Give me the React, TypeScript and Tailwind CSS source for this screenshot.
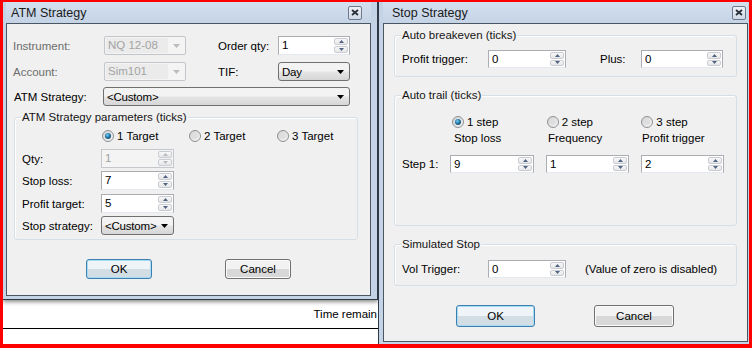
import React from "react";

const font = "font-['Liberation_Sans',Arial,sans-serif]";

function CloseBox() {
  return (
    <div className="flex h-[14px] w-[14px] items-center justify-center rounded-[2px] border border-[#6e7a8a] bg-gradient-to-b from-[#eef2f7] to-[#cfd9e6]">
      <svg width="8" height="7" viewBox="0 0 8 7">
        <path d="M1 1 L7 6 M7 1 L1 6" stroke="#2b2f36" strokeWidth="1.8" />
      </svg>
    </div>
  );
}

function Window({
  title,
  titlePad,
  className,
  children,
}: {
  title: string;
  titlePad: string;
  className: string;
  children: React.ReactNode;
}) {
  return (
    <div className={`flex flex-col bg-[#c4d3e6] ${className}`}>
      <div className={`flex h-[21px] shrink-0 items-center justify-between bg-gradient-to-b from-[#d5e0ee] to-[#c4d3e6] ${titlePad}`}>
        <span className="text-[12.5px] text-[#1a1a1a]">{title}</span>
        <CloseBox />
      </div>
      <div className="flex-1 border border-[#4b5663] bg-[#f0f0f0]">{children}</div>
    </div>
  );
}

function SpinArrows({ disabled }: { disabled?: boolean }) {
  const c = disabled ? "#b5b9c0" : "#4f6383";
  return (
    <div className="my-[1px] mr-[1px] flex w-[14px] flex-col gap-[1px]">
      <div className="flex flex-1 items-center justify-center rounded-[2px] border border-[#c9ccd2] bg-gradient-to-b from-[#f8f8f8] to-[#e6e6e6]">
        <svg width="5" height="3" viewBox="0 0 5 3">
          <polygon points="0,3 5,3 2.5,0" fill={c} />
        </svg>
      </div>
      <div className="flex flex-1 items-center justify-center rounded-[2px] border border-[#c9ccd2] bg-gradient-to-b from-[#f8f8f8] to-[#e6e6e6]">
        <svg width="5" height="3" viewBox="0 0 5 3">
          <polygon points="0,0 5,0 2.5,3" fill={c} />
        </svg>
      </div>
    </div>
  );
}

function Spin({ value, w, h = "h-[19px]", disabled }: { value: string; w: string; h?: string; disabled?: boolean }) {
  return (
    <div
      className={`flex ${w} ${h} shrink-0 border ${
        disabled ? "border-[#c4c8cc] bg-[#f4f4f4] text-[#a0a0a0]" : "border-[#abadb3] border-b-[#e3e9ef] bg-white text-black"
      }`}
    >
      <span className="flex-1 pl-[3px] leading-[16px]">{value}</span>
      <SpinArrows disabled={disabled} />
    </div>
  );
}

function Combo({ value, w }: { value: string; w: string }) {
  return (
    <div className={`flex ${w} h-[19px] shrink-0 items-center justify-between rounded-[3px] border border-[#707070] bg-gradient-to-b from-[#f3f3f3] from-45% via-[#e4e4e4] via-55% to-[#d6d6d6] pl-[3px] pr-[5px]`}>
      <span className="tracking-[-0.2px]">{value}</span>
      <svg width="7" height="4" viewBox="0 0 7 4" className="shrink-0">
        <polygon points="0,0 7,0 3.5,4" fill="#000" />
      </svg>
    </div>
  );
}

function DisabledCombo({ value, w }: { value: string; w: string }) {
  return (
    <div className={`flex ${w} h-[19px] shrink-0 items-center rounded-[2px] border border-[#c2c6ca] bg-[#f4f4f4] p-[1px]`}>
      <span className="h-full w-[62px] bg-[#ebebeb] pl-[2px] leading-[15px] text-[#a3a3a3]">{value}</span>
      <div className="flex flex-1 justify-center">
        <svg width="7" height="4" viewBox="0 0 7 4">
          <polygon points="0,0 7,0 3.5,4" fill="#bcbcbc" />
        </svg>
      </div>
    </div>
  );
}

function Radio({ checked, label, w }: { checked?: boolean; label: string; w: string }) {
  return (
    <div className={`flex ${w} items-center gap-[3px]`}>
      <svg width="12" height="12" viewBox="0 0 12 12">
        <defs>
          <linearGradient id="rb" x1="0" y1="0" x2="1" y2="1">
            <stop offset="0" stopColor="#d0d0d0" />
            <stop offset="1" stopColor="#f8f8f8" />
          </linearGradient>
          <radialGradient id="rd" cx="0.4" cy="0.35" r="0.7">
            <stop offset="0" stopColor="#7ad1f4" />
            <stop offset="0.5" stopColor="#2a7fb0" />
            <stop offset="1" stopColor="#124766" />
          </radialGradient>
        </defs>
        <circle cx="6" cy="6" r="5.5" fill="url(#rb)" stroke="#8d9095" />
        {checked ? (
          <circle cx="6" cy="6" r="3" fill="url(#rd)" />
        ) : (
          <circle cx="6" cy="6" r="3" fill="#dedede" />
        )}
      </svg>
      <span>{label}</span>
    </div>
  );
}

function Group({ label, className, children }: { label: string; className: string; children: React.ReactNode }) {
  return (
    <div className={`relative rounded-[3px] border border-[#d5dfe5] shadow-[inset_1px_1px_0_#ffffff] ${className}`}>
      <span className="absolute -top-[8px] left-[6px] bg-[#f0f0f0] px-[1px] leading-[14px] text-[#151515]">{label}</span>
      {children}
    </div>
  );
}

function Button({ label, focused, w, h }: { label: string; focused?: boolean; w: string; h: string }) {
  return (
    <div
      className={`flex ${w} ${h} items-center justify-center rounded-[3px] border ${
        focused
          ? "border-[#3c7fb1] bg-gradient-to-b from-[#eef4f8] from-50% to-[#d3dde4] to-50% shadow-[inset_0_0_0_1px_#a8dcf2]"
          : "border-[#707070] bg-gradient-to-b from-[#f2f2f2] from-50% to-[#d8d8d8] to-50% shadow-[inset_0_0_0_1px_#fbfbfb]"
      }`}
    >
      <span className="text-black">{label}</span>
    </div>
  );
}

function AtmStrategy() {
  return (
    <Window
      title="ATM Strategy"
      titlePad="pl-[5px] pr-[9px]"
      className="h-[298px] border-r border-b border-[#2f3a46] pl-[3px] pr-[6px] pb-[3px] shadow-[0_2px_4px_rgba(0,0,0,0.45)]"
    >
      <div className="pt-[12px]">
        <div className="flex h-[19px] items-center">
          <span className="w-[97px] pl-[6px] text-[#6d6d6d]">Instrument:</span>
          <DisabledCombo value="NQ 12-08" w="w-[82px]" />
          <span className="w-[92px] pl-[32px]">Order qty:</span>
          <Spin value="1" w="w-[72px]" />
        </div>
        <div className="mt-[7px] flex h-[19px] items-center">
          <span className="w-[97px] pl-[6px] text-[#6d6d6d]">Account:</span>
          <DisabledCombo value="Sim101" w="w-[82px]" />
          <span className="w-[92px] pl-[32px]">TIF:</span>
          <Combo value="Day" w="w-[72px]" />
        </div>
        <div className="mt-[6px] flex h-[19px] items-center">
          <span className="w-[96px] pl-[7px]">ATM Strategy:</span>
          <Combo value="<Custom>" w="w-[247px]" />
        </div>
        <Group label="ATM Strategy parameters (ticks)" className="mt-[11px] ml-[7px] w-[344px] pb-[4px]">
          <div className="mt-[11px] flex h-[13px] items-center pl-[87px]">
            <Radio checked label="1 Target" w="w-[87px]" />
            <Radio label="2 Target" w="w-[88px]" />
            <Radio label="3 Target" w="w-[80px]" />
          </div>
          <div className="mt-[7px] flex h-[19px] items-center">
            <span className="w-[86px] pl-[7px]">Qty:</span>
            <Spin value="1" w="w-[73px]" disabled />
          </div>
          <div className="mt-[3px] flex h-[19px] items-center">
            <span className="w-[86px] pl-[7px]">Stop loss:</span>
            <Spin value="7" w="w-[73px]" />
          </div>
          <div className="mt-[4px] flex h-[19px] items-center">
            <span className="w-[86px] pl-[7px]">Profit target:</span>
            <Spin value="5" w="w-[73px]" />
          </div>
          <div className="mt-[3px] flex h-[19px] items-center">
            <span className="w-[86px] pl-[7px]">Stop strategy:</span>
            <Combo value="<Custom>" w="w-[73px]" />
          </div>
        </Group>
        <div className="mt-[19px] flex pl-[79px]">
          <Button label="OK" focused w="w-[66px]" h="h-[20px]" />
          <div className="ml-[73px]">
            <Button label="Cancel" w="w-[66px]" h="h-[20px]" />
          </div>
        </div>
      </div>
    </Window>
  );
}

function StopStrategy() {
  return (
    <Window
      title="Stop Strategy"
      titlePad="pl-[9px] pr-[2px]"
      className="h-full flex-1 border-l border-[#2f3a46] pl-[4px] pr-[1px] pb-[2px]"
    >
      <Group label="Auto breakeven (ticks)" className="mt-[11px] ml-[10px] w-[343px] pb-[8px]">
        <div className="mt-[14px] flex h-[18px] items-center">
          <span className="w-[93px] pl-[7px]">Profit trigger:</span>
          <Spin value="0" w="w-[78px]" h="h-[18px]" />
          <span className="w-[75px] pl-[34px]">Plus:</span>
          <Spin value="0" w="w-[82px]" h="h-[18px]" />
        </div>
      </Group>
      <Group label="Auto trail (ticks)" className="mt-[18px] ml-[10px] w-[343px] pb-[52px]">
        <div className="mt-[19px] flex h-[13px] items-center pl-[57px]">
          <Radio checked label="1 step" w="w-[95px]" />
          <Radio label="2 step" w="w-[95px]" />
          <Radio label="3 step" w="w-[95px]" />
        </div>
        <div className="mt-[3px] flex h-[14px] items-center pl-[59px]">
          <span className="w-[95px]">Stop loss</span>
          <span className="w-[95px]">Frequency</span>
          <span className="w-[95px]">Profit trigger</span>
        </div>
        <div className="mt-[10px] flex h-[18px] items-center">
          <span className="w-[55px] pl-[7px]">Step 1:</span>
          <Spin value="9" w="w-[84px]" h="h-[18px]" />
          <div className="ml-[12px]">
            <Spin value="1" w="w-[83px]" h="h-[18px]" />
          </div>
          <div className="ml-[12px]">
            <Spin value="2" w="w-[83px]" h="h-[18px]" />
          </div>
        </div>
      </Group>
      <Group label="Simulated Stop" className="mt-[18px] ml-[10px] w-[343px] pb-[7px]">
        <div className="mt-[15px] flex h-[18px] items-center">
          <span className="w-[93px] pl-[7px]">Vol Trigger:</span>
          <Spin value="0" w="w-[78px]" h="h-[18px]" />
          <span className="ml-[19px]">(Value of zero is disabled)</span>
        </div>
      </Group>
      <div className="mt-[19px] flex pl-[72px]">
        <Button label="OK" focused w="w-[79px]" h="h-[22px]" />
        <div className="ml-[59px]">
          <Button label="Cancel" w="w-[80px]" h="h-[22px]" />
        </div>
      </div>
    </Window>
  );
}

export default function App() {
  return (
    <div
      className={`flex h-[348px] w-[752px] overflow-hidden border-t-2 border-r-[3px] border-b-4 border-l-[3px] border-[#ff0000] bg-white text-[11.5px] leading-[14px] text-black ${font}`}
    >
      <div className="flex w-[375px] shrink-0 flex-col">
        <AtmStrategy />
        <div className="flex h-[29px] justify-end border-b border-black pt-[7px] pr-[1px] whitespace-nowrap">
          Time remain
        </div>
      </div>
      <StopStrategy />
    </div>
  );
}
